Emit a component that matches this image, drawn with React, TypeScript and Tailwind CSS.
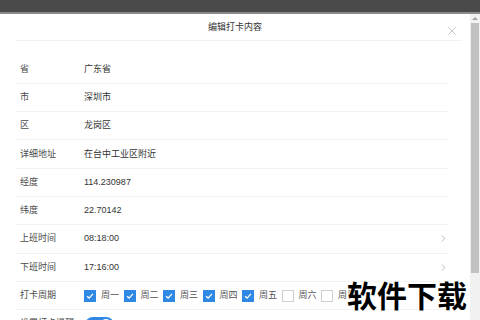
import { ChevronRight, X } from 'lucide-react';

const FIELDS: { label: string; value: string; arrow?: boolean }[] = [
  { label: '省', value: '广东省' },
  { label: '市', value: '深圳市' },
  { label: '区', value: '龙岗区' },
  { label: '详细地址', value: '在台中工业区附近' },
  { label: '经度', value: '114.230987' },
  { label: '纬度', value: '22.70142' },
  { label: '上班时间', value: '08:18:00', arrow: true },
  { label: '下班时间', value: '17:16:00', arrow: true },
];

const DAYS: { name: string; on: boolean }[] = [
  { name: '周一', on: true },
  { name: '周二', on: true },
  { name: '周三', on: true },
  { name: '周四', on: true },
  { name: '周五', on: true },
  { name: '周六', on: false },
  { name: '周日', on: false },
];

function Check({ on }: { on: boolean }) {
  if (!on) return <span className="h-[12px] w-[12px] shrink-0 border border-[#cfcfcf] bg-white" />;
  return (
    <span className="flex h-[12px] w-[12px] shrink-0 items-center justify-center bg-[#2f88e3]">
      <svg viewBox="0 0 12 12" className="h-[10px] w-[10px]" fill="none" stroke="white" strokeWidth="1.6">
        <path d="M2.5 6.2 5 8.5 9.5 3.5" />
      </svg>
    </span>
  );
}

function Row({ label, children }: { label: string; children: React.ReactNode }) {
  return (
    <div className="flex h-[28.3px] items-center border-b border-[#f3f3f3] px-[4px]">
      <span className="w-[64px] shrink-0 text-[#4a4a4a]">{label}</span>
      {children}
    </div>
  );
}

export default function App() {
  return (
    <div
      className="relative flex h-[320px] w-[480px] flex-col overflow-hidden bg-white text-[9px] leading-none text-[#333]"
      style={{ fontFamily: '"Liberation Sans", "Noto Sans CJK SC", sans-serif' }}
    >
      <div className="h-[12px] shrink-0 bg-[#4a4a4a]" />
      <div className="h-[2px] shrink-0 bg-[#8a8a8a]" />
      <div className="flex min-h-0 flex-1">
        <div className="min-w-0 flex-1">
          <div className="relative ml-[16px] mr-[8px] flex h-[27px] items-center justify-center border-b border-[#f2f2f2] pr-[8px]">
            <span className="text-[#333]">编辑打卡内容</span>
            <X className="absolute right-[3px] top-[10px] h-[14px] w-[14px] text-[#b5b5b5]" strokeWidth={1.3} />
          </div>
          <div className="ml-[16px] mr-[22px] mt-[14.5px] flex flex-col">
            {FIELDS.map((f) => (
              <Row key={f.label} label={f.label}>
                <span className="flex-1">{f.value}</span>
                {f.arrow && (
                  <ChevronRight className="-mr-[5px] h-[11px] w-[11px] text-[#9a9a9a]" strokeWidth={1.5} />
                )}
              </Row>
            ))}
            <Row label="打卡周期">
              <div className="flex items-center gap-[4.5px]">
                {DAYS.map((d) => (
                  <span key={d.name} className="flex items-center gap-[5px]">
                    <Check on={d.on} />
                    <span className="text-[#555]">{d.name}</span>
                  </span>
                ))}
              </div>
            </Row>
            <Row label="设置打卡提醒">
              <span className="mt-[2px] ml-[1px] flex h-[16px] w-[29px] items-center justify-end rounded-full bg-[#2f88e3] px-[2px]">
                <span className="h-[12px] w-[12px] rounded-full bg-white" />
              </span>
            </Row>
          </div>
        </div>
        <div className="flex w-[10px] shrink-0 flex-col bg-[#f1f1f1]">
          <div className="flex h-[9px] items-center justify-center">
            <span className="h-0 w-0 border-x-[3px] border-b-[3px] border-x-transparent border-b-[#a3a3a3]" />
          </div>
          <div className="mx-[1px] h-[250px] bg-[#c1c1c1]" />
        </div>
      </div>
      <span
        className="absolute left-[347px] top-[279px] text-[30px] font-bold leading-none text-black"
        style={{ fontFamily: '"Noto Sans CJK SC", sans-serif', textShadow: '0 0 2px #fff, 0 0 2px #fff' }}
      >
        软件下载
      </span>
    </div>
  );
}
